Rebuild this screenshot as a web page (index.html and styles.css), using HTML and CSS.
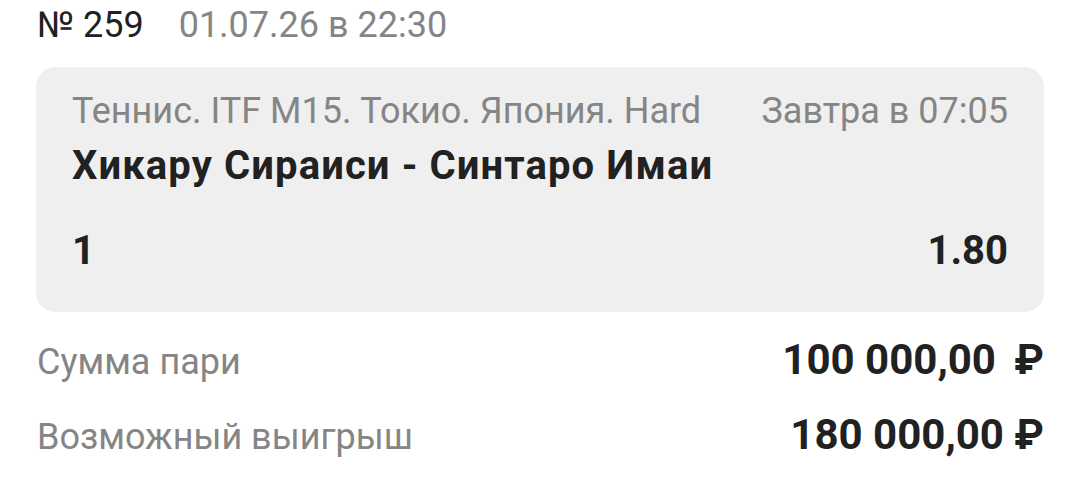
FILE: index.html
```html
<!DOCTYPE html>
<html lang="ru">
<head>
    <meta charset="UTF-8">
    <meta name="viewport" content="width=device-width, initial-scale=1.0">
    <title>Пари № 259</title>
    <link rel="stylesheet" href="styles.css">
</head>
<body>
    <div class="bet">
        <div class="bet-head">
            <span class="bet-number">№ 259</span>
            <span class="bet-date">01.07.26 в 22:30</span>
        </div>

        <div class="event-card">
            <div class="event-top">
                <span class="event-league">Теннис. ITF M15. Токио. Япония. Hard</span>
                <span class="event-time">Завтра в 07:05</span>
            </div>
            <div class="event-title">Хикару Сираиси - Синтаро Имаи</div>
            <div class="event-odds">
                <span>1</span>
                <span>1.80</span>
            </div>
        </div>

        <div class="summary">
            <div class="summary-row">
                <span class="summary-label">Сумма пари</span>
                <span class="summary-value">100 000,00 <span class="currency wide">₽</span></span>
            </div>
            <div class="summary-row">
                <span class="summary-label">Возможный выигрыш</span>
                <span class="summary-value">180 000,00 <span class="currency">₽</span></span>
            </div>
        </div>
    </div>
</body>
</html>
```

FILE: styles.css
```css
body {
    margin: 0;
    background: #ffffff;
    font-family: Roboto, "Noto Sans", sans-serif;
    color: #212121;
}
.bet {
    padding: 0 36px 0 37px;
}
.bet-head {
    display: flex;
    gap: 35px;
    height: 67px;
    align-items: flex-start;
    font-size: 36px;
    line-height: 50px;
}
.bet-number {
    color: #212121;
}
.bet-date {
    color: #858585;
}
.event-card {
    background: #efefef;
    border-radius: 20px;
    padding: 21px 36px 0 36px;
    height: 245px;
    box-sizing: border-box;
    margin-left: -1px;
}
.event-top {
    display: flex;
    justify-content: space-between;
    font-size: 36px;
    line-height: 46px;
    color: #858585;
}
.event-title {
    font-size: 40px;
    font-weight: 700;
    letter-spacing: 1.1px;
    line-height: 50px;
    margin-top: 7px;
}
.event-odds {
    display: flex;
    justify-content: space-between;
    font-size: 40px;
    font-weight: 700;
    line-height: 50px;
    margin-top: 35px;
}
.summary {
    display: flex;
    flex-direction: column;
    gap: 23px;
    padding-top: 23px;
}
.summary-row {
    display: flex;
    justify-content: space-between;
    align-items: baseline;
    line-height: 50px;
}
.summary-label {
    font-size: 36px;
    color: #858585;
}
.summary-value {
    font-size: 42px;
    font-weight: 700;
}
.currency.wide {
    margin-left: 8px;
}
```
